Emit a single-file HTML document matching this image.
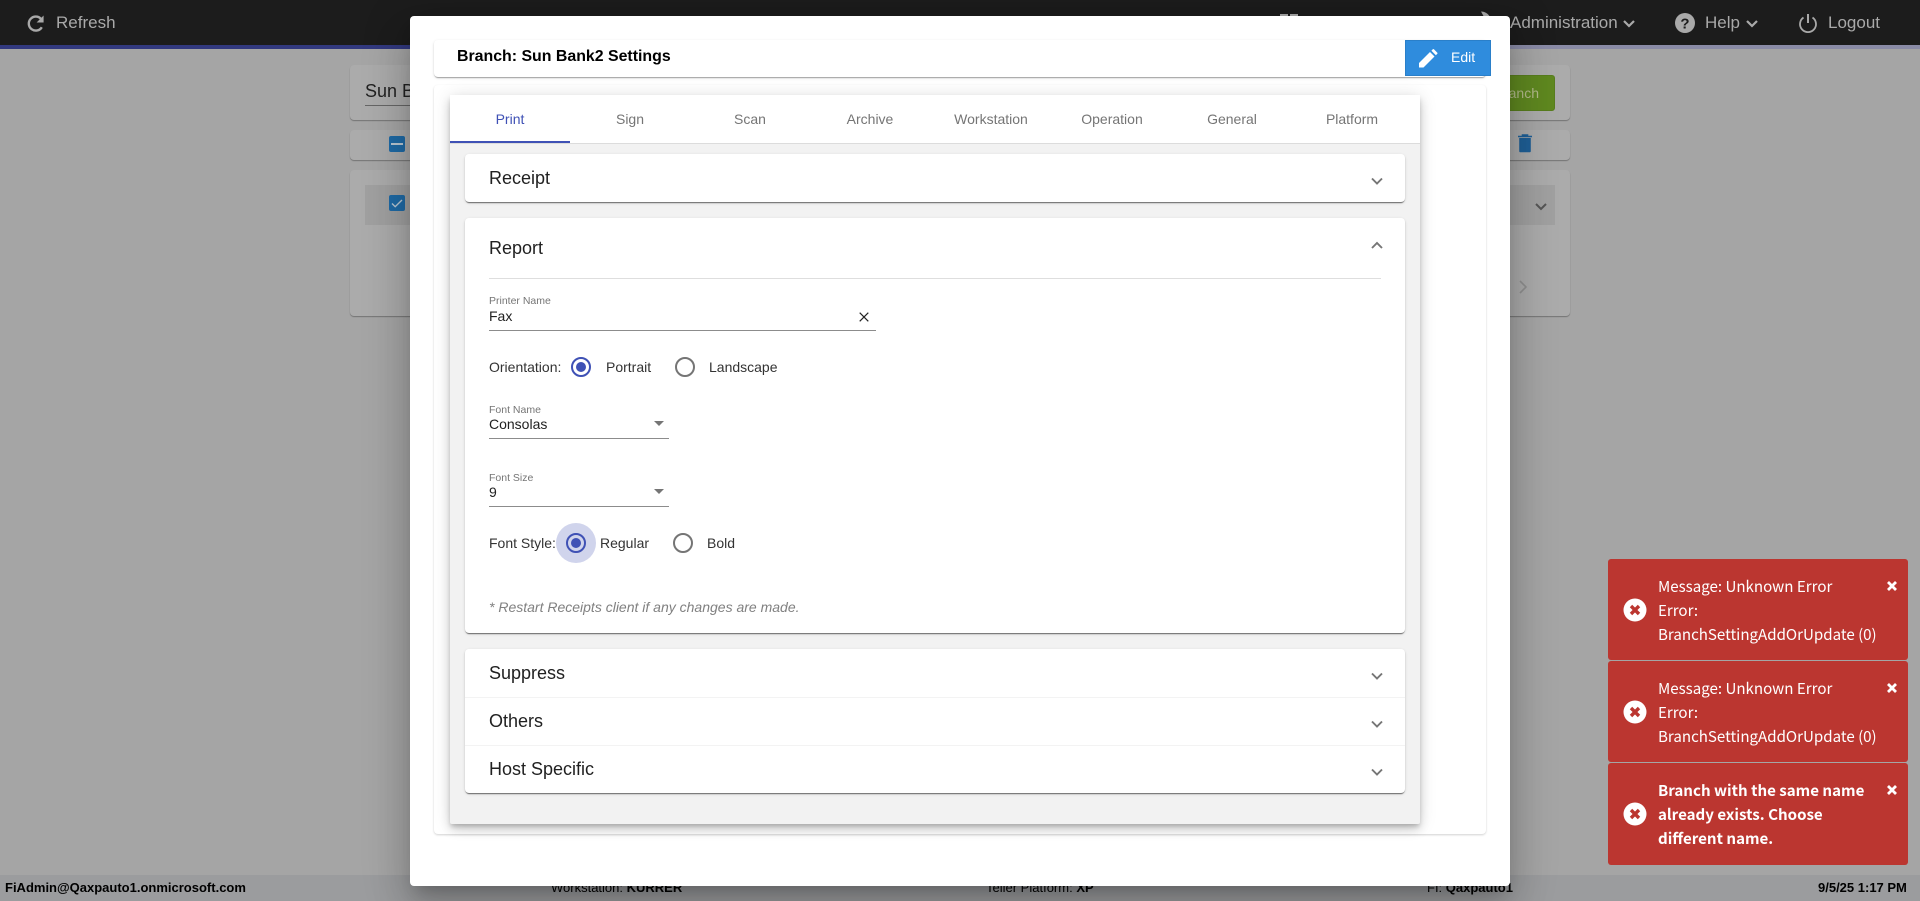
<!DOCTYPE html>
<html><head><meta charset="utf-8"><title>Branch Settings</title>
<style>
*{box-sizing:border-box}
html,body{margin:0;padding:0;width:1920px;height:901px;overflow:hidden;background:#a5a5a5;font-family:"Liberation Sans",sans-serif}
.a{position:absolute}
.t{position:absolute;white-space:nowrap;line-height:20px;height:20px}
#top{left:0;top:0;width:1920px;height:45px;background:#1c1c1c}
#line{left:0;top:45px;width:1920px;height:4px;background:linear-gradient(90deg,#32397f 0,#32397f 410px,#8a8ba6 1510px,#8a8ba6 100%)}
.nav{color:#a9a9a9;font-size:17px}
.bg{background:#ababab;border-radius:4px;box-shadow:0 1px 1px rgba(0,0,0,.3)}
#foot{left:0;top:875px;width:1920px;height:26px;background:#9b9c9e}
.f{font-size:13px;color:#000;top:878px}
#modal{left:410px;top:16px;width:1100px;height:870px;background:#fff;border-radius:4px;box-shadow:0 11px 15px -7px rgba(0,0,0,.2),0 24px 38px 3px rgba(0,0,0,.14),0 9px 46px 8px rgba(0,0,0,.12)}
.card{background:#fff;border-radius:4px;box-shadow:0 2px 1px -1px rgba(0,0,0,.2),0 1px 1px rgba(0,0,0,.14),0 1px 3px rgba(0,0,0,.12)}
.tab{font-size:14px;color:#757575;width:120px;text-align:center;top:109px}
.p{left:465px;width:940px;background:#fff;border-radius:4px;box-shadow:0 2px 1px -1px rgba(0,0,0,.4),0 1px 1px rgba(0,0,0,.2),0 1px 3px rgba(0,0,0,.12)}
.h{font-size:18px;color:#212121;left:489px}
.l{font-size:10.5px;color:#757575;left:489px}
.v{font-size:14px;color:#212121}
.u{height:1px;background:#8c8c8c;left:489px}
.toast{left:1608px;width:300px;height:101px;background:#bb3630;border-radius:3px}
.tt{position:absolute;left:1658px;color:#fff;font-family:"Noto Sans CJK JP","Liberation Sans",sans-serif;font-size:15.1px;line-height:24px;white-space:nowrap}
svg{position:absolute;display:block;overflow:visible}
</style></head>
<body>
<div class="a" id="top"></div>
<div class="a" id="line"></div>

<svg style="left:26px;top:14px" width="20" height="20" viewBox="0 0 20 20"><path d="M15.8 13.2A7 7 0 1 1 15 4.9" fill="none" stroke="#a9a9a9" stroke-width="2.4"/><path d="M17.6 1.5v7h-7z" fill="#a9a9a9"/></svg>
<div class="t nav" style="left:56px;top:13px">Refresh</div>
<div class="t nav" style="left:1510px;top:13px">Administration</div>
<svg style="left:1622px;top:19px" width="14" height="10" viewBox="0 0 14 10"><path d="M2 2l5 5 5-5" fill="none" stroke="#a9a9a9" stroke-width="2.2"/></svg>
<svg style="left:1675px;top:13px" width="20" height="20" viewBox="0 0 20 20"><circle cx="10" cy="10" r="10" fill="#a9a9a9"/><text x="10" y="15.5" text-anchor="middle" font-family="Liberation Sans" font-weight="700" font-size="15" fill="#1c1c1c">?</text></svg>
<div class="t nav" style="left:1705px;top:13px">Help</div>
<svg style="left:1745px;top:19px" width="14" height="10" viewBox="0 0 14 10"><path d="M2 2l5 5 5-5" fill="none" stroke="#a9a9a9" stroke-width="2.2"/></svg>
<svg style="left:1798px;top:13px" width="20" height="20" viewBox="0 0 20 20"><path d="M5.5 4.5a8 8 0 1 0 9 0" fill="none" stroke="#a9a9a9" stroke-width="1.8"/><path d="M10 1v9" stroke="#a9a9a9" stroke-width="2"/></svg>
<div class="t nav" style="left:1828px;top:13px">Logout</div>

<div class="a bg" style="left:350px;top:65px;width:1220px;height:55px"></div>
<div class="a bg" style="left:350px;top:130px;width:1220px;height:30px"></div>
<div class="a bg" style="left:350px;top:170px;width:1220px;height:146px"></div>
<div class="a" style="left:365px;top:185px;width:1190px;height:40px;background:#a0a0a0"></div>
<div class="t" style="left:365px;top:81px;font-size:18px;color:#222">Sun Bank2</div>
<div class="a" style="left:365px;top:105px;width:150px;height:1px;background:#666"></div>
<div class="a" style="left:1450px;top:75px;width:105px;height:36px;background:#5f8820;border-radius:3px;border:1px solid #587d1e"></div>
<div class="t" style="left:1454px;top:83px;width:85px;text-align:right;font-size:14px;color:#b1b98a">Add Branch</div>
<div class="a" style="left:389px;top:136px;width:16px;height:16px;background:#1f6aa5;border-radius:2px"></div>
<div class="a" style="left:391px;top:143px;width:12px;height:2px;background:#b9c7d2"></div>
<div class="a" style="left:389px;top:195px;width:16px;height:16px;background:#1f6aa5;border-radius:2px"></div>
<svg style="left:389px;top:195px" width="16" height="16" viewBox="0 0 16 16"><path d="M3 8.5l3.2 3.2L13 5" fill="none" stroke="#b9c7d2" stroke-width="1.4"/></svg>
<svg style="left:1517px;top:133px" width="16" height="20" viewBox="0 0 16 20"><path d="M1 3.5h14M5.5 3.5V2h5v1.5" fill="none" stroke="#1f5f96" stroke-width="1.6"/><path d="M2.2 5h11.6v13a1.3 1.3 0 0 1-1.3 1.3h-9A1.3 1.3 0 0 1 2.2 18z" fill="#1f5f96"/></svg>
<svg style="left:1535px;top:202px" width="12" height="10" viewBox="0 0 12 10"><path d="M1 2l5 5 5-5" fill="none" stroke="#555" stroke-width="2"/></svg>
<svg style="left:1518px;top:279px" width="10" height="16" viewBox="0 0 10 16"><path d="M2 2l6 6-6 6" fill="none" stroke="#8f8f8f" stroke-width="1.6"/></svg>

<div class="a" id="foot"></div>
<div class="t f" style="left:5px;font-weight:700">FiAdmin@Qaxpauto1.onmicrosoft.com</div>
<div class="t f" style="left:551px">Workstation: <b>KURRER</b></div>
<div class="t f" style="left:986px">Teller Platform: <b>XP</b></div>
<div class="t f" style="left:1427px">FI: <b>Qaxpauto1</b></div>
<div class="t f" style="left:1818px;font-weight:700">9/5/25 1:17 PM</div>
<svg style="left:1280px;top:13px" width="20" height="4" viewBox="0 0 20 4"><rect x="0" y="1" width="8" height="3" fill="#a9a9a9"/><rect x="10" y="1" width="8" height="3" fill="#a9a9a9"/></svg>
<svg style="left:1480px;top:10px" width="14" height="7" viewBox="0 0 14 7"><path d="M1 1.5c4 0 7 2 9 5.5H4z" fill="#a9a9a9"/></svg>

<div class="a" id="modal"></div>
<div class="a card" style="left:434px;top:40px;width:1052px;height:37px"></div>
<div class="t" style="left:457px;top:47px;font-size:15.9px;font-weight:700;color:#000">Branch: Sun Bank2 Settings</div>
<div class="a" style="left:1405px;top:40px;width:86px;height:36px;background:#2f8cdd;border:1px solid #2a7fc9"></div>
<svg style="left:1419px;top:49px" width="20" height="19" viewBox="0 0 20 19"><path d="M0 18.5v-4.5L11 3l4.5 4.5L4.5 18.5z" fill="#fff"/><path d="M12.4 1.7l1.4-1.4a.8.8 0 0 1 1.1 0l3.4 3.4a.8.8 0 0 1 0 1.1l-1.4 1.4z" fill="#fff"/></svg>
<div class="t" style="left:1451px;top:47px;font-size:14px;color:#fff">Edit</div>

<div class="a card" style="left:434px;top:85px;width:1052px;height:749px;box-shadow:0 1px 2px rgba(0,0,0,.18)"></div>
<div class="a" style="left:450px;top:95px;width:970px;height:729px;background:#f2f2f2;border-radius:2px;box-shadow:0 3px 5px -1px rgba(0,0,0,.2),0 6px 10px rgba(0,0,0,.14),0 1px 18px rgba(0,0,0,.12)"></div>
<div class="a" style="left:450px;top:95px;width:970px;height:49px;background:#fff;border-bottom:1px solid #dcdcdc"></div>
<div class="a" style="left:450px;top:141px;width:120px;height:2px;background:#3f51b5"></div>
<div class="t tab" style="left:450px;color:#3f51b5">Print</div>
<div class="t tab" style="left:570px">Sign</div>
<div class="t tab" style="left:690px">Scan</div>
<div class="t tab" style="left:810px">Archive</div>
<div class="t tab" style="left:931px">Workstation</div>
<div class="t tab" style="left:1052px">Operation</div>
<div class="t tab" style="left:1172px">General</div>
<div class="t tab" style="left:1292px">Platform</div>

<div class="a p" style="top:154px;height:48px"></div>
<div class="t h" style="top:168px">Receipt</div>
<svg style="left:1371px;top:177px" width="12" height="9" viewBox="0 0 12 9"><path d="M1 1.5l5 5 5-5" fill="none" stroke="#757575" stroke-width="1.9"/></svg>

<div class="a p" style="top:218px;height:415px"></div>
<div class="t h" style="top:238px">Report</div>
<svg style="left:1371px;top:241px" width="12" height="9" viewBox="0 0 12 9"><path d="M1 7l5-5 5 5" fill="none" stroke="#757575" stroke-width="1.9"/></svg>
<div class="a" style="left:489px;top:278px;width:892px;height:1px;background:#dedede"></div>

<div class="t l" style="top:291px">Printer Name</div>
<div class="t v" style="left:489px;top:306px">Fax</div>
<div class="a u" style="top:330px;width:387px"></div>
<svg style="left:859px;top:312px" width="10" height="10" viewBox="0 0 10 10"><path d="M.7.7l8.6 8.6M9.3.7L.7 9.3" stroke="#222" stroke-width="1.2"/></svg>

<div class="t v" style="left:489px;top:357px;color:#333">Orientation:</div>
<svg style="left:571px;top:357px" width="20" height="20"><circle cx="10" cy="10" r="9" fill="none" stroke="#3f51b5" stroke-width="2"/><circle cx="10" cy="10" r="5" fill="#3f51b5"/></svg>
<div class="t v" style="left:606px;top:357px;color:#333">Portrait</div>
<svg style="left:675px;top:357px" width="20" height="20"><circle cx="10" cy="10" r="9" fill="none" stroke="#757575" stroke-width="2"/></svg>
<div class="t v" style="left:709px;top:357px;color:#333">Landscape</div>

<div class="t l" style="top:400px">Font Name</div>
<div class="t v" style="left:489px;top:414px">Consolas</div>
<div class="a u" style="top:438px;width:180px"></div>
<svg style="left:654px;top:421px" width="10" height="5"><path d="M0 0h10L5 5z" fill="#757575"/></svg>

<div class="t l" style="top:468px">Font Size</div>
<div class="t v" style="left:489px;top:482px">9</div>
<div class="a u" style="top:506px;width:180px"></div>
<svg style="left:654px;top:489px" width="10" height="5"><path d="M0 0h10L5 5z" fill="#757575"/></svg>

<div class="t v" style="left:489px;top:533px;color:#333">Font Style:</div>
<div class="a" style="left:556px;top:523px;width:40px;height:40px;border-radius:50%;background:#d0d4ec"></div>
<svg style="left:566px;top:533px" width="20" height="20"><circle cx="10" cy="10" r="9" fill="none" stroke="#3f51b5" stroke-width="2"/><circle cx="10" cy="10" r="5" fill="#3f51b5"/></svg>
<div class="t v" style="left:600px;top:533px;color:#333">Regular</div>
<svg style="left:673px;top:533px" width="20" height="20"><circle cx="10" cy="10" r="9" fill="none" stroke="#757575" stroke-width="2"/></svg>
<div class="t v" style="left:707px;top:533px;color:#333">Bold</div>

<div class="t" style="left:489px;top:597px;font-size:14px;font-style:italic;color:#808080">* Restart Receipts client if any changes are made.</div>

<div class="a p" style="top:649px;height:144px"></div>
<div class="a" style="left:465px;top:697px;width:940px;height:1px;background:#f3f3f3"></div>
<div class="a" style="left:465px;top:745px;width:940px;height:1px;background:#f3f3f3"></div>
<div class="t h" style="top:663px">Suppress</div>
<div class="t h" style="top:711px">Others</div>
<div class="t h" style="top:759px">Host Specific</div>
<svg style="left:1371px;top:672px" width="12" height="9" viewBox="0 0 12 9"><path d="M1 1.5l5 5 5-5" fill="none" stroke="#757575" stroke-width="1.9"/></svg>
<svg style="left:1371px;top:720px" width="12" height="9" viewBox="0 0 12 9"><path d="M1 1.5l5 5 5-5" fill="none" stroke="#757575" stroke-width="1.9"/></svg>
<svg style="left:1371px;top:768px" width="12" height="9" viewBox="0 0 12 9"><path d="M1 1.5l5 5 5-5" fill="none" stroke="#757575" stroke-width="1.9"/></svg>

<div class="a toast" style="top:559px"></div>
<div class="a toast" style="top:661px"></div>
<div class="a toast" style="top:763px;height:102px"></div>
<div class="tt" style="top:574px">Message: Unknown Error<br>Error:<br>BranchSettingAddOrUpdate (0)</div>
<div class="tt" style="top:676px">Message: Unknown Error<br>Error:<br>BranchSettingAddOrUpdate (0)</div>
<div class="tt" style="top:778px;font-weight:700">Branch with the same name<br>already exists. Choose<br>different name.</div>
<svg style="left:1623px;top:598px" width="24" height="24" viewBox="0 0 24 24"><circle cx="12" cy="12" r="11.5" fill="#fff"/><path d="M8 8l8 8M16 8l-8 8" stroke="#bb3630" stroke-width="3.4"/></svg>
<svg style="left:1623px;top:700px" width="24" height="24" viewBox="0 0 24 24"><circle cx="12" cy="12" r="11.5" fill="#fff"/><path d="M8 8l8 8M16 8l-8 8" stroke="#bb3630" stroke-width="3.4"/></svg>
<svg style="left:1623px;top:802px" width="24" height="24" viewBox="0 0 24 24"><circle cx="12" cy="12" r="11.5" fill="#fff"/><path d="M8 8l8 8M16 8l-8 8" stroke="#bb3630" stroke-width="3.4"/></svg>
<svg style="left:1887px;top:581px" width="10" height="10" viewBox="0 0 10 10"><path d="M1 1l8 8M9 1L1 9" stroke="#fff" stroke-width="2.8"/></svg>
<svg style="left:1887px;top:683px" width="10" height="10" viewBox="0 0 10 10"><path d="M1 1l8 8M9 1L1 9" stroke="#fff" stroke-width="2.8"/></svg>
<svg style="left:1887px;top:785px" width="10" height="10" viewBox="0 0 10 10"><path d="M1 1l8 8M9 1L1 9" stroke="#fff" stroke-width="2.8"/></svg>
</body></html>
